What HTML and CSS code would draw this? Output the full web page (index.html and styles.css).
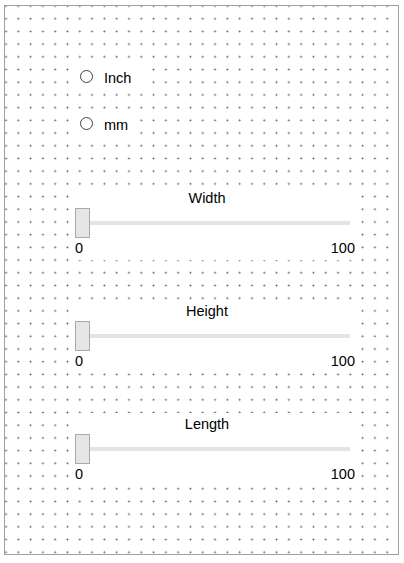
FILE: index.html
```html
<!DOCTYPE html>
<html>
<head>
<meta charset="utf-8">
<link rel="stylesheet" href="styles.css">
</head>
<body>
<div class="form">
  <div class="radios">
    <label class="radio"><span class="circle"></span><span class="rtext">Inch</span></label>
    <label class="radio"><span class="circle"></span><span class="rtext">mm</span></label>
  </div>
  <div class="sliders">
    <div class="slider">
      <div class="caption">Width</div>
      <div class="trackrow"><span class="thumb"></span><span class="track"></span></div>
      <div class="scale"><span>0</span><span>100</span></div>
    </div>
    <div class="slider">
      <div class="caption">Height</div>
      <div class="trackrow"><span class="thumb"></span><span class="track"></span></div>
      <div class="scale"><span>0</span><span>100</span></div>
    </div>
    <div class="slider">
      <div class="caption">Length</div>
      <div class="trackrow"><span class="thumb"></span><span class="track"></span></div>
      <div class="scale"><span>0</span><span>100</span></div>
    </div>
  </div>
</div>
</body>
</html>
```

FILE: styles.css
```css
html, body {
  margin: 0;
  padding: 0;
  background: #ffffff;
}
body {
  font-family: "Liberation Sans", Arial, sans-serif;
  font-size: 14.5px;
  line-height: 17px;
  color: #000000;
}
.form {
  box-sizing: border-box;
  margin: 5px 0 0 4px;
  width: 395px;
  height: 550px;
  border: 1px solid #a0a0a0;
  background-color: #ffffff;
  background-image: radial-gradient(circle, #5e5e5e 0, #5e5e5e 0.7px, rgba(94,94,94,0) 1.2px);
  background-size: 12.3px 12.71px;
  background-position: -5.15px -6.35px;
  padding: 59px 0 0 69px;
  display: flex;
  flex-direction: column;
}
.radios {
  display: flex;
  flex-direction: column;
  align-items: flex-start;
  gap: 20px;
}
.radio {
  display: flex;
  align-items: flex-start;
  background: #ffffff;
  padding: 5px 12px 5px 6px;
}
.circle {
  box-sizing: border-box;
  width: 13px;
  height: 13px;
  border: 1px solid #404040;
  border-radius: 50%;
  background: #ffffff;
}
.rtext {
  margin-left: 11px;
}
.sliders {
  margin-top: 48px;
  margin-left: -2px;
  display: flex;
  flex-direction: column;
  gap: 40px;
}
.slider {
  width: 280px;
  padding: 3px;
  background: #ffffff;
}
.caption {
  text-align: center;
  padding-right: 16px;
}
.trackrow {
  display: flex;
  align-items: flex-start;
  margin-top: 1px;
  height: 30px;
}
.thumb {
  box-sizing: border-box;
  width: 15px;
  height: 30px;
  background: #e6e6e6;
  border: 1px solid #a9a9a9;
  flex: none;
}
.track {
  flex: 1;
  height: 4px;
  margin-top: 13px;
  margin-right: 5px;
  background: #e4e4e4;
}
.scale {
  display: flex;
  justify-content: space-between;
  margin-top: 2px;
}
```
